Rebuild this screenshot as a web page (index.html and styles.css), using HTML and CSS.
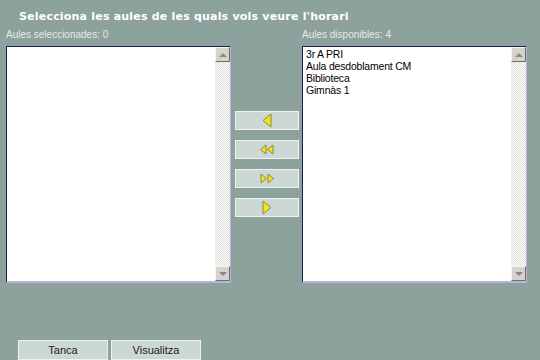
FILE: index.html
```html
<!DOCTYPE html>
<html lang="ca">
<head>
    <meta charset="UTF-8">
    <title>Selecciona aules</title>
    <link rel="stylesheet" href="styles.css">
</head>
<body>

    <h1>Selecciona les aules de les quals vols veure l'horari</h1>

    <div class="picker">
        <div class="column">
            <div class="label">Aules seleccionades: 0</div>
            <div class="listbox">
                <ul class="items"></ul>
                <div class="scrollbar">
                    <div class="arrow up"></div>
                    <div class="track"></div>
                    <div class="arrow down"></div>
                </div>
            </div>
        </div>

        <div class="moves">
            <button class="move">
                <svg width="10" height="15" viewBox="0 0 10 15"><polygon points="9,1 9,14 1,7.5" fill="#f4e21c" stroke="#8a8a3a"/></svg>
            </button>
            <button class="move">
                <svg width="16" height="11" viewBox="0 0 16 11"><polygon points="7,1 7,10 1.5,5.5" fill="#f4e21c" stroke="#8a8a3a"/><polygon points="14,1 14,10 8.5,5.5" fill="#f4e21c" stroke="#8a8a3a"/></svg>
            </button>
            <button class="move">
                <svg width="16" height="11" viewBox="0 0 16 11"><polygon points="2,1 2,10 7.5,5.5" fill="#f4e21c" stroke="#8a8a3a"/><polygon points="9,1 9,10 14.5,5.5" fill="#f4e21c" stroke="#8a8a3a"/></svg>
            </button>
            <button class="move">
                <svg width="10" height="15" viewBox="0 0 10 15"><polygon points="1,1 1,14 9,7.5" fill="#f4e21c" stroke="#8a8a3a"/></svg>
            </button>
        </div>

        <div class="column">
            <div class="label">Aules disponibles: 4</div>
            <div class="listbox">
                <ul class="items">
                    <li>3r A PRI</li>
                    <li>Aula desdoblament CM</li>
                    <li>Biblioteca</li>
                    <li>Gimnàs 1</li>
                </ul>
                <div class="scrollbar">
                    <div class="arrow up"></div>
                    <div class="track"></div>
                    <div class="arrow down"></div>
                </div>
            </div>
        </div>
    </div>

    <div class="actions">
        <button class="action">Tanca</button>
        <button class="action">Visualitza</button>
    </div>

</body>
</html>
```

FILE: styles.css
```css
body {
    font-family: 'Liberation Sans', Arial, sans-serif;
    background-color: #8da19d;
    margin: 0;
    padding: 0;
    width: 540px;
    height: 360px;
    overflow: hidden;
}
h1 {
    font-family: 'DejaVu Sans', Verdana, sans-serif;
    font-size: 11px;
    font-weight: bold;
    letter-spacing: 0.2px;
    color: #ffffff;
    margin: 0;
    padding: 10px 0 0 19px;
    height: 18px;
    line-height: 13px;
}
.picker {
    display: flex;
    padding: 0 6px;
    height: 256px;
}
.column {
    width: 225px;
    display: flex;
    flex-direction: column;
}
.label {
    font-size: 10px;
    color: #e4eae8;
    height: 18px;
    line-height: 14px;
}
.listbox {
    display: flex;
    height: 237px;
    background-color: #fff;
    border-top: 1px solid #1e1e4e;
    border-left: 1px solid #1e1e4e;
    border-right: 1px solid #b4b4dc;
    border-bottom: 2px solid #b4b4dc;
    box-sizing: border-box;
}
.items {
    flex: 1;
    list-style: none;
    margin: 0;
    padding: 1px 3px;
    font-size: 10.5px;
    line-height: 12px;
    letter-spacing: -0.2px;
    color: #000;
}
.scrollbar {
    width: 15px;
    display: flex;
    flex-direction: column;
    background-color: #ecebe8;
    background-image: repeating-conic-gradient(#fafaf8 0 25%, #e2e2de 0 50%);
    background-size: 2px 2px;
}
.track {
    flex: 1;
}
.arrow {
    height: 15px;
    box-sizing: border-box;
    background-color: #d6d3cc;
    border: 1px solid;
    border-color: #f4f3f0 #6e6e6a #6e6e6a #f4f3f0;
    display: flex;
    align-items: center;
    justify-content: center;
}
.arrow::after {
    content: "";
    border-left: 4px solid transparent;
    border-right: 4px solid transparent;
}
.arrow.up::after {
    border-bottom: 4px solid #8a8a88;
}
.arrow.down::after {
    border-top: 4px solid #8a8a88;
}
.moves {
    width: 64px;
    margin: 83px 3px 0 4px;
    display: flex;
    flex-direction: column;
    gap: 10px;
}
button {
    font-family: 'Liberation Sans', Arial, sans-serif;
    background-color: #ccd8d6;
    border: 1px solid #eef3f2;
    padding: 0;
    cursor: pointer;
}
.move {
    height: 19px;
    display: flex;
    align-items: center;
    justify-content: center;
}
.actions {
    display: flex;
    gap: 3px;
    padding: 56px 0 0 18px;
}
.action {
    width: 90px;
    height: 20px;
    font-size: 11px;
    color: #222;
}
```
